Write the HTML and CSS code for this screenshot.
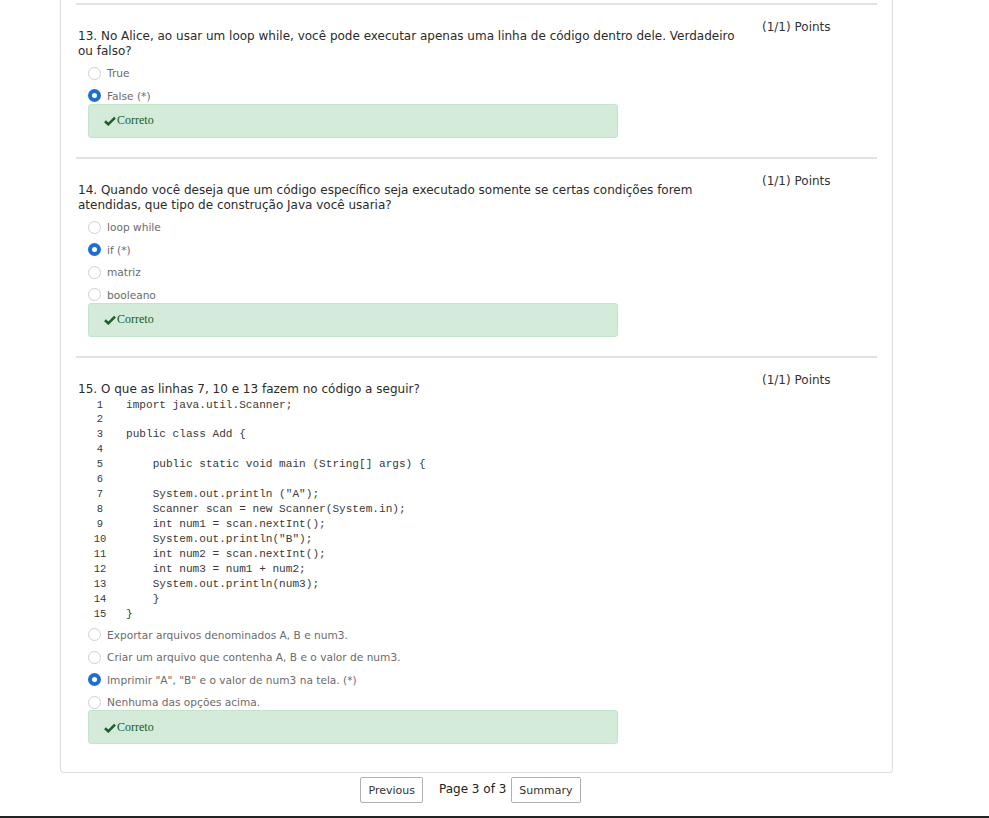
FILE: index.html
```html
<!DOCTYPE html>
<html>
<head>
<meta charset="utf-8">
<link rel="stylesheet" href="styles.css">
</head>
<body>
<div class="panel">
  <hr class="sep">
  <div class="q">
    <div class="q-head">
      <div class="q-text">13. No Alice, ao usar um loop while, você pode executar apenas uma linha de código dentro dele. Verdadeiro ou falso?</div>
      <div class="q-points">(1/1) Points</div>
    </div>
    <div class="options">
      <div class="opt"><span class="radio"></span><span>True</span></div>
      <div class="opt"><span class="radio on"></span><span>False (*)</span></div>
    </div>
    <div class="feedback"><svg class="chk" width="12" height="10" viewBox="0 0 12 10"><path d="M1 5.2 L4.3 8.3 L11 1.6" fill="none" stroke="#1f5f2c" stroke-width="2.6"/></svg>Correto</div>
  </div>
  <hr class="sep">
  <div class="q">
    <div class="q-head">
      <div class="q-text">14. Quando você deseja que um código específico seja executado somente se certas condições forem atendidas, que tipo de construção Java você usaria?</div>
      <div class="q-points">(1/1) Points</div>
    </div>
    <div class="options">
      <div class="opt"><span class="radio"></span><span>loop while</span></div>
      <div class="opt"><span class="radio on"></span><span>if (*)</span></div>
      <div class="opt"><span class="radio"></span><span>matriz</span></div>
      <div class="opt"><span class="radio"></span><span>booleano</span></div>
    </div>
    <div class="feedback"><svg class="chk" width="12" height="10" viewBox="0 0 12 10"><path d="M1 5.2 L4.3 8.3 L11 1.6" fill="none" stroke="#1f5f2c" stroke-width="2.6"/></svg>Correto</div>
  </div>
  <hr class="sep">
  <div class="q">
    <div class="q-head">
      <div class="q-text">15. O que as linhas 7, 10 e 13 fazem no código a seguir?</div>
      <div class="q-points">(1/1) Points</div>
    </div>
    <div class="code">
      <div class="ln">1</div><div class="cl">import java.util.Scanner;</div>
      <div class="ln">2</div><div class="cl"></div>
      <div class="ln">3</div><div class="cl">public class Add {</div>
      <div class="ln">4</div><div class="cl"></div>
      <div class="ln">5</div><div class="cl">    public static void main (String[] args) {</div>
      <div class="ln">6</div><div class="cl"></div>
      <div class="ln">7</div><div class="cl">    System.out.println ("A");</div>
      <div class="ln">8</div><div class="cl">    Scanner scan = new Scanner(System.in);</div>
      <div class="ln">9</div><div class="cl">    int num1 = scan.nextInt();</div>
      <div class="ln">10</div><div class="cl">    System.out.println("B");</div>
      <div class="ln">11</div><div class="cl">    int num2 = scan.nextInt();</div>
      <div class="ln">12</div><div class="cl">    int num3 = num1 + num2;</div>
      <div class="ln">13</div><div class="cl">    System.out.println(num3);</div>
      <div class="ln">14</div><div class="cl">    }</div>
      <div class="ln">15</div><div class="cl">}</div>
    </div>
    <div class="options code-opts">
      <div class="opt"><span class="radio"></span><span>Exportar arquivos denominados A, B e num3.</span></div>
      <div class="opt"><span class="radio"></span><span>Criar um arquivo que contenha A, B e o valor de num3.</span></div>
      <div class="opt"><span class="radio on"></span><span>Imprimir "A", "B" e o valor de num3 na tela. (*)</span></div>
      <div class="opt"><span class="radio"></span><span>Nenhuma das opções acima.</span></div>
    </div>
    <div class="feedback"><svg class="chk" width="12" height="10" viewBox="0 0 12 10"><path d="M1 5.2 L4.3 8.3 L11 1.6" fill="none" stroke="#1f5f2c" stroke-width="2.6"/></svg>Correto</div>
  </div>
</div>
<div class="pager">
  <button class="btn">Previous</button>
  <span class="page-label">Page 3 of 3</span>
  <button class="btn">Summary</button>
</div>
<div class="bottom-bar"></div>
</body>
</html>
```
FILE: styles.css
```css
html, body {
  margin: 0;
  padding: 0;
  background: #fff;
}
body {
  font-family: "DejaVu Sans", Verdana, sans-serif;
  color: #333;
  width: 989px;
  height: 818px;
  overflow: hidden;
  position: relative;
}
.panel {
  margin-left: 60px;
  border: 1px solid #dedede;
  border-top: none;
  border-radius: 0 0 4px 4px;
  padding: 3px 15px 28px 15px;
  box-sizing: content-box;
  width: 801px;
}
.sep {
  margin: 0;
  border: none;
  height: 2px;
  background: #dfe3e8;
}
.q + .sep {
  margin-top: 19.5px;
}
.q-head {
  display: flex;
  margin-top: 14px;
}
.q-text {
  flex: 1;
  padding: 9.5px 16px 0 2px;
  font-size: 12px;
  line-height: 15px;
  color: #2b2b2b;
}
.q-points {
  width: 115px;
  font-size: 12px;
  line-height: 16px;
  color: #333;
}
.options {
  display: flex;
  flex-direction: column;
  gap: 6.5px;
  margin-top: 6.5px;
  padding-left: 12px;
}
.code-opts {
  margin-top: 5px;
}
.opt {
  display: flex;
  align-items: center;
  height: 16px;
  font-size: 10.6px;
  color: #6b6b6b;
}
.radio {
  width: 13px;
  height: 13px;
  box-sizing: border-box;
  border: 1px solid #cfcfcf;
  border-radius: 50%;
  background: #fff;
  margin-right: 6px;
  flex: none;
}
.radio.on {
  border: 4px solid #1d6fd0;
}
.feedback {
  margin-left: 12px;
  width: 530px;
  height: 34px;
  box-sizing: border-box;
  background: #d4ebd9;
  border: 1px solid #c4e3cb;
  border-radius: 3px;
  display: flex;
  align-items: center;
  padding-left: 15px;
  font-family: "Liberation Serif", "Times New Roman", serif;
  font-size: 12px;
  color: #165d28;
}
.chk {
  margin-right: 1px;
  margin-top: 1px;
}
.code {
  display: grid;
  grid-template-columns: 24px auto;
  margin-left: 12px;
  margin-top: 1px;
  font-family: "Liberation Mono", "Courier New", monospace;
  font-size: 11.1px;
  line-height: 14.93px;
  color: #3a3a3a;
}
.ln {
  text-align: center;
  font-size: 10.5px;
}
.cl {
  white-space: pre;
  padding-left: 14px;
  min-height: 14.93px;
}
.pager {
  display: flex;
  justify-content: center;
  align-items: center;
  width: 833px;
  margin-left: 60px;
  margin-top: 4px;
  padding-right: 12px;
  box-sizing: border-box;
  height: 26px;
}
.btn {
  height: 26px;
  box-sizing: border-box;
  border: 1px solid #b0b0b0;
  border-radius: 2px;
  background: #fff;
  font-family: "DejaVu Sans", Verdana, sans-serif;
  font-size: 11px;
  color: #333;
  padding: 0 7px;
}
.page-label {
  font-size: 12px;
  color: #222;
  margin: 0 5px 2px 16px;
}
.bottom-bar {
  position: absolute;
  left: 0;
  right: 0;
  bottom: 0;
  height: 2px;
  background: #232323;
}
```
